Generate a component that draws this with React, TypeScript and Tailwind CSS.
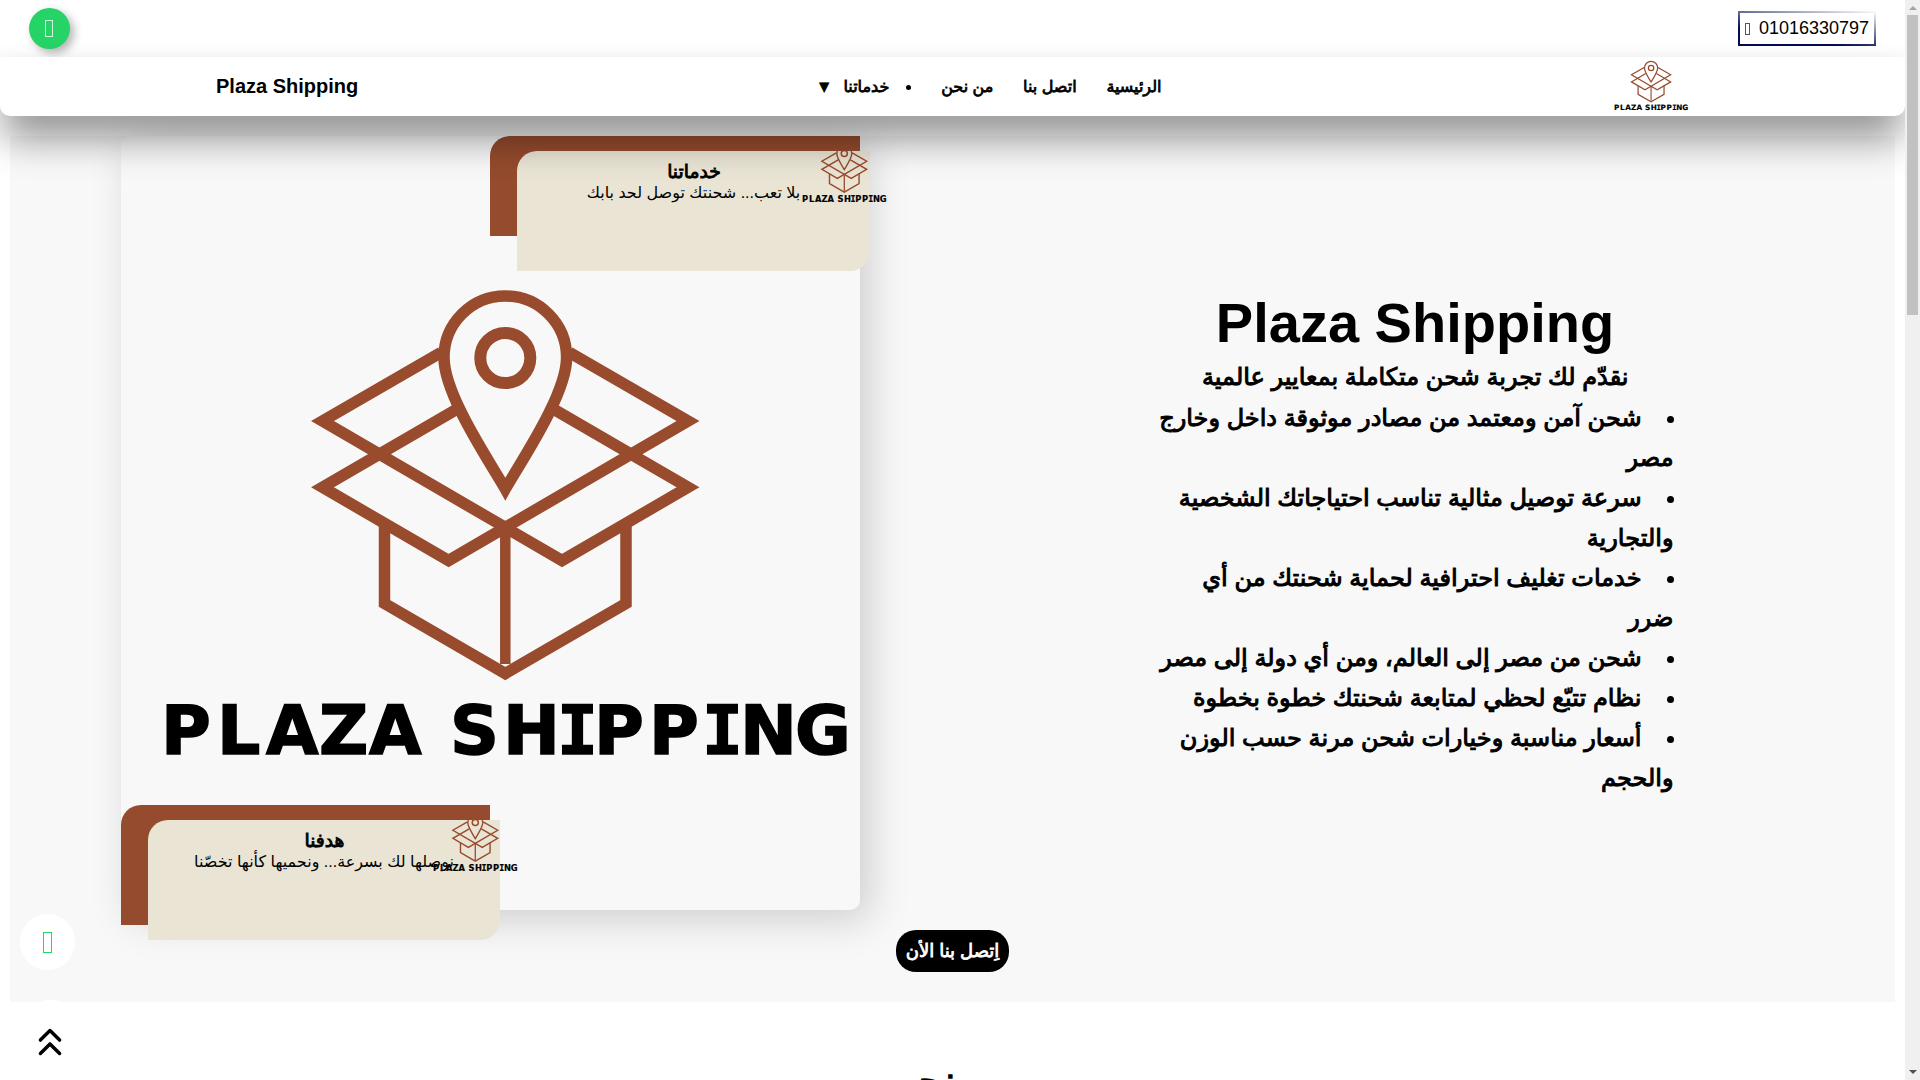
import React from 'react';
import { ChevronsUp } from 'lucide-react';

const navLinks = ['الرئيسية', 'اتصل بنا', 'من نحن'];

const features = [
  ['شحن آمن ومعتمد من مصادر موثوقة داخل وخارج', 'مصر'],
  ['سرعة توصيل مثالية تناسب احتياجاتك الشخصية', 'والتجارية'],
  ['خدمات تغليف احترافية لحماية شحنتك من أي', 'ضرر'],
  ['شحن من مصر إلى العالم، ومن أي دولة إلى مصر'],
  ['نظام تتبّع لحظي لمتابعة شحنتك خطوة بخطوة'],
  ['أسعار مناسبة وخيارات شحن مرنة حسب الوزن', 'والحجم'],
];

const Logo: React.FC<{ className: string }> = ({ className }) => (
  <svg viewBox="160 284 694 474" className={`overflow-visible ${className}`} direction="ltr">
    <g fill="none" stroke="#984b2d" strokeWidth="11.5" strokeMiterlimit="10">
      <path d="M441 352.5L322.5 421L562 560.5L688 487.3L555 410" />
      <path d="M569.5 352.5L688 421L448.6 560.5L322.5 487.3L455.5 410" />
      <path d="M384.5 524V603.5L505.3 673.5L626 603.5V524" />
      <path d="M505.3 527V664" strokeWidth="10.5" />
      <path d="M505.3 489C490 462 444 395 444 357.5A61.3 61.5 0 0 1 566.6 357.5C566.6 395 520.6 462 505.3 489Z" />
      <circle cx="505.3" cy="358" r="25" strokeWidth="12" />
    </g>
    <text
      x="161 217 266 319 369 410 450 503 557 594 649 702 740 795"
      y="753.5"
      fontSize="68"
      fontWeight="700"
      stroke="#000"
      strokeWidth="1.5"
      className="font-['DejaVu_Sans'] [-webkit-text-stroke:0]"
    >
      PLAZA SH<tspan className="font-['DejaVu_Sans_Mono']">I</tspan>PP
      <tspan className="font-['DejaVu_Sans_Mono']">I</tspan>NG
    </text>
  </svg>
);

const TopBar: React.FC = () => (
  <div className="h-[57px] flex items-start justify-between pl-[29px] pr-[29px] shadow-[inset_0_-14px_12px_-12px_rgba(0,0,0,0.03)]">
    <div className="mt-2 w-[41px] h-[41px] rounded-full bg-[#25d366] flex items-center justify-center shadow-[4px_4px_10px_rgba(0,0,0,0.3)]">
      <span className="-ml-px w-2 h-[17px] border border-white/80" />
    </div>
    <div className="mt-[11px] w-[138px] h-[35px] p-[2px] bg-linear-[10deg] from-[#000d50] from-30% to-white">
      <div className="h-full bg-white flex items-center justify-center gap-[9px] text-lg leading-none">
        <span className="w-[5px] h-3 border border-gray-600 mt-[1px]" />
        <span className="-mt-px">01016330797</span>
      </div>
    </div>
  </div>
);

const Navbar: React.FC = () => (
  <nav className="relative z-10 h-[59px] bg-white rounded-b-[10px] flex items-center shadow-[0_25px_38px_-3px_rgba(0,0,0,0.43)]">
    <div className="w-[604px] pl-[216px] pb-[2px] text-xl font-bold whitespace-nowrap">Plaza Shipping</div>
    <ul
      dir="rtl"
      className="w-[557.5px] flex items-center gap-[29.8px] text-base font-medium whitespace-nowrap [-webkit-text-stroke:0.8px_black]"
    >
      {navLinks.map((link) => (
        <li key={link}>{link}</li>
      ))}
      <li className="list-disc list-inside">
        خدماتنا <span className="mr-[7px]">▼</span>
      </li>
    </ul>
    <Logo className="ml-[452.5px] mb-[2px] w-[74.5px] h-[51px]" />
  </nav>
);

const HeroCard: React.FC<{ title: string; text: string; className: string }> = ({ title, text, className }) => (
  <div className={`absolute rounded-tl-[20px] bg-[#954b2d] ${className}`}>
    <div className="relative mt-[15px] ml-[27px] mr-[-10px] h-[120px] pt-[9px] rounded-tl-[20px] rounded-br-[20px] bg-[#e9e4d4] text-center">
      <h3 className="pl-px text-[18.72px] leading-[23px] font-medium [-webkit-text-stroke:0.9px_black]">{title}</h3>
      <p className="text-base leading-[19px] whitespace-nowrap">{text}</p>
      <Logo className="absolute -top-[7px] left-[284.5px] w-[85px] h-[59px]" />
    </div>
  </div>
);

const HeroSection: React.FC = () => (
  <section className="mx-[10px] mt-5 h-[866px] bg-[#f8f8f8]">
    <div className="flex">
      <div className="relative ml-[111px] w-[739px] h-[774px] rounded-[10px] bg-[#f8f8f8] shadow-[10px_10px_40px_rgba(0,0,0,0.17)]">
        <Logo className="mt-[148px] ml-[39px] w-[694px] h-[474px]" />
        <HeroCard
          title="خدماتنا"
          text="بلا تعب... شحنتك توصل لحد بابك"
          className="top-0 right-0 w-[370px] h-[100px]"
        />
        <HeroCard
          title="هدفنا"
          text="نوصلها لك بسرعة... ونحميها كأنها تخصّنا"
          className="top-[669px] left-0 w-[369px] h-[120px]"
        />
      </div>
      <div dir="rtl" className="ml-[297px] mt-[155px] w-[516px] whitespace-nowrap">
        <h1 className="mb-[2px] text-[56px] leading-[64px] font-bold text-center">Plaza Shipping</h1>
        <div className="-mr-[0.5px] text-2xl leading-10 font-medium [-webkit-text-stroke:1px_black]">
          <p className="text-center">نقدّم لك تجربة شحن متكاملة بمعايير عالمية</p>
          <ul className="pt-px list-disc list-inside">
            {features.map(([line, rest]) => (
              <li key={line}>
                {line}
                {rest && <br />}
                {rest}
              </li>
            ))}
          </ul>
        </div>
      </div>
    </div>
    <div className="mt-5 flex justify-center">
      <button className="w-[113px] h-[42px] rounded-[20px] bg-black text-white text-lg leading-none font-medium whitespace-nowrap [-webkit-text-stroke:0.8px_white]">
        اِتصل بنا الأن
      </button>
    </div>
  </section>
);

const Scrollbar: React.FC = () => (
  <div className="w-[15px] h-full bg-[#f0f0f0] flex flex-col items-center justify-between pt-[6px] pb-[6px]">
    <div>
      <div className="mx-auto w-0 border-x-4 border-x-transparent border-b-4 border-b-[#a3a3a3]" />
      <div className="mt-[5px] w-[11px] h-[300px] bg-[#c1c1c1]" />
    </div>
    <div className="w-0 border-x-4 border-x-transparent border-t-4 border-t-[#505050]" />
  </div>
);

const App: React.FC = () => {
  return (
    <div className="relative w-[1920px] h-[1080px] overflow-hidden flex bg-white text-black font-['Liberation_Sans','DejaVu_Sans',sans-serif]">
      <div className="w-[1905px] h-full overflow-hidden">
        <TopBar />
        <Navbar />
        <HeroSection />
        <h2
          dir="rtl"
          className="mt-[54px] pl-[2px] text-center text-[40px] leading-[50px] font-medium [-webkit-text-stroke:1.5px_black]"
        >
          من نحن
        </h2>
      </div>
      <Scrollbar />

      {/* Floating buttons */}
      <div className="absolute left-5 top-[914px] w-[55px] h-14 rounded-full bg-white flex items-center justify-center">
        <span className="w-[9px] h-[21px] border border-[#25d366]" />
      </div>
      <div className="absolute left-5 top-[1000px] w-[60px] h-[60px] rounded-full bg-white">
        <ChevronsUp className="mt-[19px] ml-[7px] w-[46px] h-[46px]" strokeWidth={1.8} />
      </div>
    </div>
  );
};

export default App;
